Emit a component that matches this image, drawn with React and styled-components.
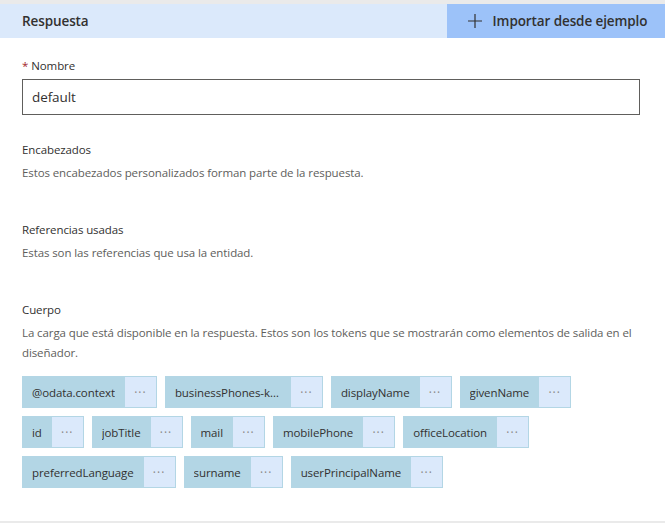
import React from 'react';
import styled, { createGlobalStyle } from 'styled-components';

const GlobalStyle = createGlobalStyle`
  html, body {
    margin: 0;
    padding: 0;
    background: #ffffff;
  }
  body {
    font-family: "Open Sans", "Noto Sans", sans-serif;
    color: #323130;
    letter-spacing: -0.1px;
  }
`;

const Page = styled.div`
  width: 665px;
  height: 523px;
  box-sizing: border-box;
  border-top: 4px solid #eaeaea;
  border-bottom: 2px solid #eaeaea;
  display: flex;
  flex-direction: column;
  overflow: hidden;
`;

const Header = styled.div`
  height: 34px;
  flex: none;
  display: flex;
  align-items: stretch;
  justify-content: space-between;
  background: #dbe9fb;
`;

const Title = styled.div`
  display: flex;
  align-items: center;
  padding-left: 22px;
  font-size: 13.5px;
  font-weight: 600;
  color: #323130;
`;

const ImportButton = styled.button`
  width: 218px;
  border: none;
  background: #9cc2f9;
  display: flex;
  align-items: center;
  justify-content: center;
  gap: 10px;
  font-family: inherit;
  letter-spacing: -0.1px;
  font-size: 13.5px;
  font-weight: 600;
  color: #323130;
  padding: 0 0 0 2px;
  cursor: pointer;
`;

const Body = styled.div`
  padding: 20px 25px 0 22px;
  display: flex;
  flex-direction: column;
`;

const Label = styled.label`
  font-size: 11.5px;
  line-height: 16px;
  color: #323130;
  & > span {
    color: #a4262c;
    margin-right: 3px;
  }
`;

const Input = styled.input`
  margin-top: 5px;
  height: 36px;
  box-sizing: border-box;
  border: 1px solid #605e5c;
  padding: 0 9px;
  font-family: inherit;
  letter-spacing: -0.1px;
  font-size: 13.5px;
  color: #323130;
  outline: none;
`;

const Section = styled.div`
  margin-top: ${(p) => p.$top}px;
`;

const SectionTitle = styled.div`
  font-size: 11.5px;
  line-height: 20px;
  color: #323130;
`;

const Description = styled.div`
  margin-top: 3px;
  font-size: 11.5px;
  line-height: 20px;
  color: #605e5c;
`;

const Chips = styled.div`
  margin-top: 13px;
  display: flex;
  flex-wrap: wrap;
  gap: 8px;
`;

const Chip = styled.div`
  height: 32px;
  box-sizing: border-box;
  display: flex;
  border: 1px solid #b3d6e5;
  background: #b3d6e5;
`;

const ChipLabel = styled.span`
  padding: 0 10px 0 9px;
  display: flex;
  align-items: center;
  font-size: 11.5px;
  color: #323130;
  white-space: nowrap;
  & > span {
    max-width: 106px;
    overflow: hidden;
    text-overflow: ellipsis;
  }
`;

const ChipMenu = styled.span`
  width: 31px;
  background: #dbe9fb;
  display: flex;
  align-items: center;
  justify-content: center;
  font-size: 12px;
  color: #8a8886;
  letter-spacing: 1px;
`;

const PlusIcon = () => (
  <svg width="16" height="16" viewBox="0 0 16 16" fill="none" stroke="#323130" strokeWidth="1.2">
    <path d="M8 1v14M1 8h14" />
  </svg>
);

const tokens = [
  '@odata.context',
  'businessPhones-key',
  'displayName',
  'givenName',
  'id',
  'jobTitle',
  'mail',
  'mobilePhone',
  'officeLocation',
  'preferredLanguage',
  'surname',
  'userPrincipalName',
];

export default function App() {
  return (
    <>
      <GlobalStyle />
      <Page>
        <Header>
          <Title>Respuesta</Title>
          <ImportButton>
            <PlusIcon />
            Importar desde ejemplo
          </ImportButton>
        </Header>
        <Body>
          <Label>
            <span>*</span>Nombre
          </Label>
          <Input defaultValue="default" />

          <Section $top={25}>
            <SectionTitle>Encabezados</SectionTitle>
            <Description>Estos encabezados personalizados forman parte de la respuesta.</Description>
          </Section>

          <Section $top={37}>
            <SectionTitle>Referencias usadas</SectionTitle>
            <Description>Estas son las referencias que usa la entidad.</Description>
          </Section>

          <Section $top={37}>
            <SectionTitle>Cuerpo</SectionTitle>
            <Description>
              La carga que está disponible en la respuesta. Estos son los tokens que se mostrarán como elementos de
              salida en el diseñador.
            </Description>
            <Chips>
              {tokens.map((t) => (
                <Chip key={t}>
                  <ChipLabel>
                    <span>{t}</span>
                  </ChipLabel>
                  <ChipMenu>···</ChipMenu>
                </Chip>
              ))}
            </Chips>
          </Section>
        </Body>
      </Page>
    </>
  );
}
